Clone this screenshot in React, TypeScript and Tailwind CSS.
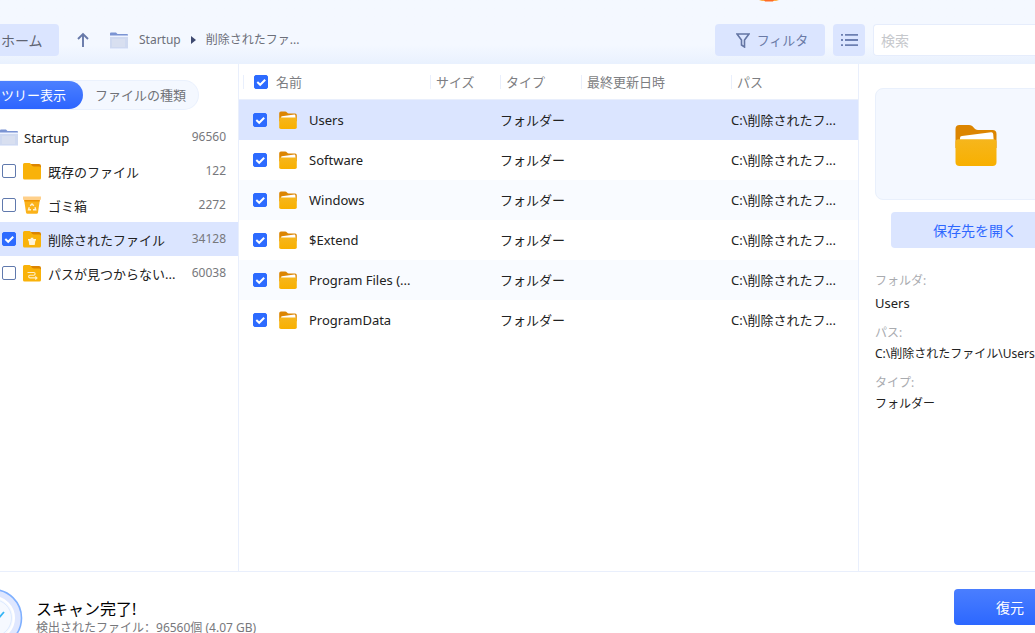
import { useState } from "react";

type IconProps = { className?: string };

function OpenFolder({ className }: IconProps) {
  return (
    <svg viewBox="0 0 42 42" className={className} aria-hidden="true">
      <defs>
        <linearGradient id="folderFront" x1="0" y1="0" x2="0" y2="1">
          <stop offset="0" stopColor="#f6b61d" />
          <stop offset="1" stopColor="#f8b000" />
        </linearGradient>
      </defs>
      <path d="M.5 5a4 4 0 0 1 4-4H14c4.500 0 5 5 9 5h14.500a4 4 0 0 1 4 4v14H.5z" fill="#dc8500" />
      <path d="M5 14Q5 12.300 7 12.100L36 8.200Q38 8 38.200 10L39 20H5z" fill="#fff" />
      <path d="M.5 18q0-2.500 3-2.800h35q3 .3 3 2.800v20a4 4 0 0 1-4 4h-33a4 4 0 0 1-4-4z" fill="url(#folderFront)" />
    </svg>
  );
}

function StartupFolder({ className }: IconProps) {
  return (
    <svg viewBox="0 0 18 17" className={className} aria-hidden="true">
      <path d="M0 1.500A1 1 0 0 1 1 .5h5L7.500 2H17a1 1 0 0 1 1 1v3H0z" fill="#7b94d3" />
      <path d="M0 3.500h18V5H0z" fill="#eef3ff" />
      <path d="M0 5h18v11H0z" fill="#cfd9f0" />
      <path d="M2 7h13v8H2z" fill="#d8dff0" />
      <path d="M0 16h18v.8H0z" fill="#dce5fb" />
    </svg>
  );
}

function FolderBase() {
  return (
    <>
      <path d="M7 2h9a2 2 0 0 1 2 2v5H7z" fill="#dc8500" />
      <path d="M0 2.500A1.500 1.500 0 0 1 1.500 1h5C8 1 8.500 4.500 11 4.500h5.500A1.500 1.500 0 0 1 18 6v10a1.500 1.500 0 0 1-1.500 1.500h-15A1.500 1.500 0 0 1 0 16z" fill="#f9b209" />
    </>
  );
}

type TreeKind = "folder" | "bin" | "deleted" | "lost";

function TreeIcon({ kind }: { kind: TreeKind }) {
  return (
    <svg viewBox="0 0 18 18" className="h-[18px] w-[18px] shrink-0" aria-hidden="true">
      {kind === "bin" ? (
        <>
          <path d="M1 3h16l-2 13.500a1.500 1.500 0 0 1-1.500 1.300h-9A1.500 1.500 0 0 1 3 16.500z" fill="#fbb21a" />
          <path d="M0 .5h18V3a1 1 0 0 1-1 1H1a1 1 0 0 1-1-1z" fill="#ffd08a" />
          <path d="M1.300 4h15.400l-.2 1.500H1.500z" fill="#ee9300" />
          <path d="M7.200 9.800 9 8l1.800 1.800M12 11.300l.7 2.400H10M8 13.700H5.500l.8-2.400" fill="none" stroke="#fff2d4" strokeWidth="1.400" />
        </>
      ) : (
        <FolderBase />
      )}
      {kind === "deleted" && (
        <path d="M5 9h2.700V7.800h2.600V9H13v1.400h-.6L11.700 15H6.300l-.7-4.600H5z" fill="#fff3d6" />
      )}
      {kind === "lost" && (
        <path d="M4.500 8.500h6.300a1.300 1.300 0 0 1 0 2.700H7a1.300 1.300 0 0 0 0 2.700h6.500M12.300 12.300l1.700 1.600-1.700 1.600" fill="none" stroke="#ffeec5" strokeWidth="1.100" />
      )}
    </svg>
  );
}

function Check({ label, initial = false }: { label: string; initial?: boolean }) {
  const [on, setOn] = useState(initial);
  return (
    <span className="grid h-3.5 w-3.5 shrink-0">
      <input
        type="checkbox"
        aria-label={label}
        checked={on}
        onChange={() => setOn(!on)}
        className="peer col-start-1 row-start-1 h-3.5 w-3.5 appearance-none rounded-[2px] border border-[#6079ad] bg-white checked:border-[#2d6bff] checked:bg-[#2d6bff]"
      />
      <svg
        viewBox="0 0 14 14"
        className="pointer-events-none invisible col-start-1 row-start-1 h-3.5 w-3.5 peer-checked:visible"
        aria-hidden="true"
      >
        <path d="M3.300 7 6.200 9.800 11.200 4.800" fill="none" stroke="#fff" strokeWidth="2" />
      </svg>
    </span>
  );
}

const tree: { label: string; count: string; kind: TreeKind; active?: boolean }[] = [
  { label: "既存のファイル", count: "122", kind: "folder" },
  { label: "ゴミ箱", count: "2272", kind: "bin" },
  { label: "削除されたファイル", count: "34128", kind: "deleted", active: true },
  { label: "パスが見つからない...", count: "60038", kind: "lost" },
];

const files = ["Users", "Software", "Windows", "$Extend", "Program Files (...", "ProgramData"];

const columns = [
  { label: "サイズ", width: "w-[70px]" },
  { label: "タイプ", width: "w-[81px]" },
  { label: "最終更新日時", width: "w-[150px]" },
  { label: "パス", width: "w-[127px]" },
];

function Toolbar() {
  return (
    <header className="relative flex shrink-0 items-center bg-linear-to-b from-[#f4f8ff] from-70% to-[#e9f1fe] pt-6 pb-2">
      <svg viewBox="0 0 20 2" className="absolute top-0 right-64 h-0.5 w-5" aria-hidden="true">
        <path d="M0 0h20l-3 1H3z" fill="#ffae45" />
        <path d="M5 0h10l-1 1.500H6z" fill="#ff6b25" />
      </svg>
      <button className="h-8 w-[59px] shrink-0 rounded-r-[4px] bg-[#dbe5ff] pt-0.5 pl-px text-left text-sm text-[#5f6472]">ホーム</button>
      <button aria-label="上へ" className="ml-[18px] flex h-8 w-3 items-center">
        <svg viewBox="0 0 12 16" className="h-4 w-3" fill="none" stroke="#6779a9" strokeWidth="1.900" aria-hidden="true">
          <path d="M6 15V2M1 7l5-5 5 5" />
        </svg>
      </button>
      <nav aria-label="パンくず" className="ml-[21px] flex items-center text-xs text-[#6c6f7a]">
        <StartupFolder className="h-[17px] w-[18px]" />
        <a href="#startup" className="ml-[11px]">Startup</a>
        <svg viewBox="0 0 5 8" className="mx-2.5 h-2 w-[5px]" aria-hidden="true">
          <path d="M0 0l5 4-5 4z" fill="#3f4a70" />
        </svg>
        <a href="#deleted">削除されたファ...</a>
      </nav>
      <div className="ml-auto flex shrink-0 gap-2">
        <button className="flex h-8 w-[110px] items-center justify-center gap-[7px] rounded-[4px] bg-[#dbe5ff] pl-1 text-[13px] text-[#6a7aa6]">
          <svg viewBox="0 0 14 15" className="h-[15px] w-3.5" fill="none" stroke="#6475a4" strokeWidth="1.600" aria-hidden="true">
            <path d="M1 1h12L8.500 7v7L5.500 12V7z" />
          </svg>
          <span className="pt-0.5">フィルタ</span>
        </button>
        <button aria-label="リスト表示" className="flex h-8 w-8 items-center justify-center rounded-[4px] bg-[#dbe5ff]">
          <svg viewBox="0 0 18 12" className="h-3 w-[18px]" fill="#6d80b2" aria-hidden="true">
            <path d="M1 0h2v1.800H1zM5 0h13v1.800H5zM1 5.100h2v1.800H1zM5 5.100h13v1.800H5zM1 10.200h2V12H1zM5 10.200h13V12H5z" />
          </svg>
        </button>
        <input
          type="search"
          aria-label="検索"
          placeholder="検索"
          className="h-8 w-[162px] rounded-l-[4px] border border-r-0 border-[#e6edfc] bg-white px-[7px] text-sm placeholder:text-[#c6c8cc]"
        />
      </div>
    </header>
  );
}

function Sidebar() {
  return (
    <aside className="w-[239px] shrink-0 border-r border-[#e9effc] pt-4">
      <div className="mb-2.5 flex h-[30px] w-[199px] rounded-r-full border border-l-0 border-[#eaf1fd] bg-[#f4f8ff] text-[13px]">
        <button className="w-[83px] rounded-r-full bg-linear-to-b from-[#4c80ff] to-[#2c64ff] pt-0.5 pl-px text-left text-white">ツリー表示</button>
        <button className="flex-1 pt-0.5 pl-3 text-left text-[#707278]">ファイルの種類</button>
      </div>
      <ul className="text-[13px] text-[#222]">
        <li className="flex h-[34px] items-center pr-3">
          <StartupFolder className="h-[17px] w-[18px]" />
          <span className="ml-1.5 flex-1 pt-1">Startup</span>
          <span className="text-xs text-[#77787c]">96560</span>
        </li>
        {tree.map((n) => (
          <li key={n.label} className={`flex h-[34px] items-center gap-[7px] pr-3 pl-0.5 ${n.active ? "bg-[#dbe5ff]" : ""}`}>
            <Check label={n.label} initial={n.active} />
            <TreeIcon kind={n.kind} />
            <span className="flex-1 whitespace-nowrap pt-1">{n.label}</span>
            <span className="text-xs text-[#77787c]">{n.count}</span>
          </li>
        ))}
      </ul>
    </aside>
  );
}

function FileTable() {
  return (
    <main className="min-w-0 flex-1">
      <table className="w-full table-fixed border-separate border-spacing-0 text-left text-[13px] whitespace-nowrap">
        <thead className="text-[#7d7e82]">
          <tr className="h-9">
            <th className="border-b border-[#e9effc] p-0 pl-1 font-normal">
              <div className="flex h-3.5 items-center gap-2 border-l border-[#e9effc] pl-2.5">
                <Check label="すべて選択" initial />
                <span className="pt-0.5">名前</span>
              </div>
            </th>
            {columns.map((c) => (
              <th key={c.label} className={`border-b border-[#e9effc] p-0 font-normal ${c.width}`}>
                <div className="flex h-3.5 items-center border-l border-[#e9effc] pl-[5px]">
                  <span className="pt-0.5">{c.label}</span>
                </div>
              </th>
            ))}
          </tr>
        </thead>
        <tbody className="text-[#222]">
          {files.map((name, i) => (
            <tr key={name} className={`h-10 ${i === 0 ? "bg-[#dbe5ff]" : i % 2 === 0 ? "bg-[#f9fbff]" : "bg-white"}`}>
              <td className="p-0 pl-3.5">
                <div className="flex items-center">
                  <Check label={name} initial />
                  <OpenFolder className="ml-3 h-[18px] w-[18px]" />
                  <span className="ml-3 pt-px">{name}</span>
                </div>
              </td>
              <td className="p-0" />
              <td className="p-0 pt-px">フォルダー</td>
              <td className="p-0" />
              <td className="p-0 pt-px">C:\削除されたフ...</td>
            </tr>
          ))}
        </tbody>
      </table>
    </main>
  );
}

function Details() {
  return (
    <aside className="w-[177px] shrink-0 overflow-hidden border-l border-[#e9effc] pt-6 pl-4">
      <div className="w-[202px]">
        <div className="flex h-28 items-center justify-center rounded-lg border border-[#e9f0fc] bg-[#f4f8ff] pt-0.5">
          <OpenFolder className="h-[42px] w-[42px]" />
        </div>
        <button className="mx-4 mt-3 h-9 w-[168px] rounded-[4px] bg-[#dbe5ff] pt-0.5 text-sm text-[#2f68ff]">保存先を開く</button>
        <dl className="mt-[22px] text-xs whitespace-nowrap text-[#222]">
          <dt className="h-[22px] leading-[22px] text-[#a9abaf]">フォルダ:</dt>
          <dd className="mb-2 h-[22px] text-[13px] leading-[22px]">Users</dd>
          <dt className="h-[21px] leading-[21px] text-[#a9abaf]">パス:</dt>
          <dd className="mb-2 h-[21px] leading-[21px]">C:\削除されたファイル\Users</dd>
          <dt className="h-[21px] leading-[21px] text-[#a9abaf]">タイプ:</dt>
          <dd className="h-[21px] leading-[21px]">フォルダー</dd>
        </dl>
      </div>
    </aside>
  );
}

function Footer() {
  return (
    <footer className="flex h-[62px] shrink-0 items-start overflow-hidden border-t border-[#e9effc]">
      <svg viewBox="0 0 24 46" className="mt-4 h-[46px] w-6 shrink-0" fill="none" aria-hidden="true">
        <circle cx="-7" cy="30" r="28.500" fill="#dfe7ff" stroke="#7fb0ff" strokeWidth="1.600" />
        <circle cx="-7" cy="30" r="21" fill="#f6f9ff" stroke="#fff" strokeWidth="2" />
        <circle cx="-7" cy="30" r="18.500" stroke="#dceaff" />
        <path d="M-9 28l6 4 7-8" stroke="#35b5f5" strokeWidth="1.800" />
      </svg>
      <div className="ml-3 pt-[26px]">
        <p className="text-base leading-[22px] text-black">スキャン完了!</p>
        <p className="text-xs leading-[14px] text-[#77787c]">
          検出されたファイル<span className="font-['Noto_Sans_CJK_SC',sans-serif]" lang="zh-CN">：</span>96560個 (4.07 GB)
        </p>
      </div>
      <button className="mt-[17px] ml-auto h-9 w-[81px] rounded-l-[4px] bg-linear-to-b from-[#4a7eff] to-[#2c67ff] pt-0.5 pl-[42px] text-left text-sm text-white">復元</button>
    </footer>
  );
}

export default function App() {
  return (
    <div className="flex h-screen flex-col overflow-hidden bg-white font-['Noto_Sans','Noto_Sans_CJK_JP',sans-serif]">
      <Toolbar />
      <div className="flex min-h-0 flex-1">
        <Sidebar />
        <FileTable />
        <Details />
      </div>
      <Footer />
    </div>
  );
}
